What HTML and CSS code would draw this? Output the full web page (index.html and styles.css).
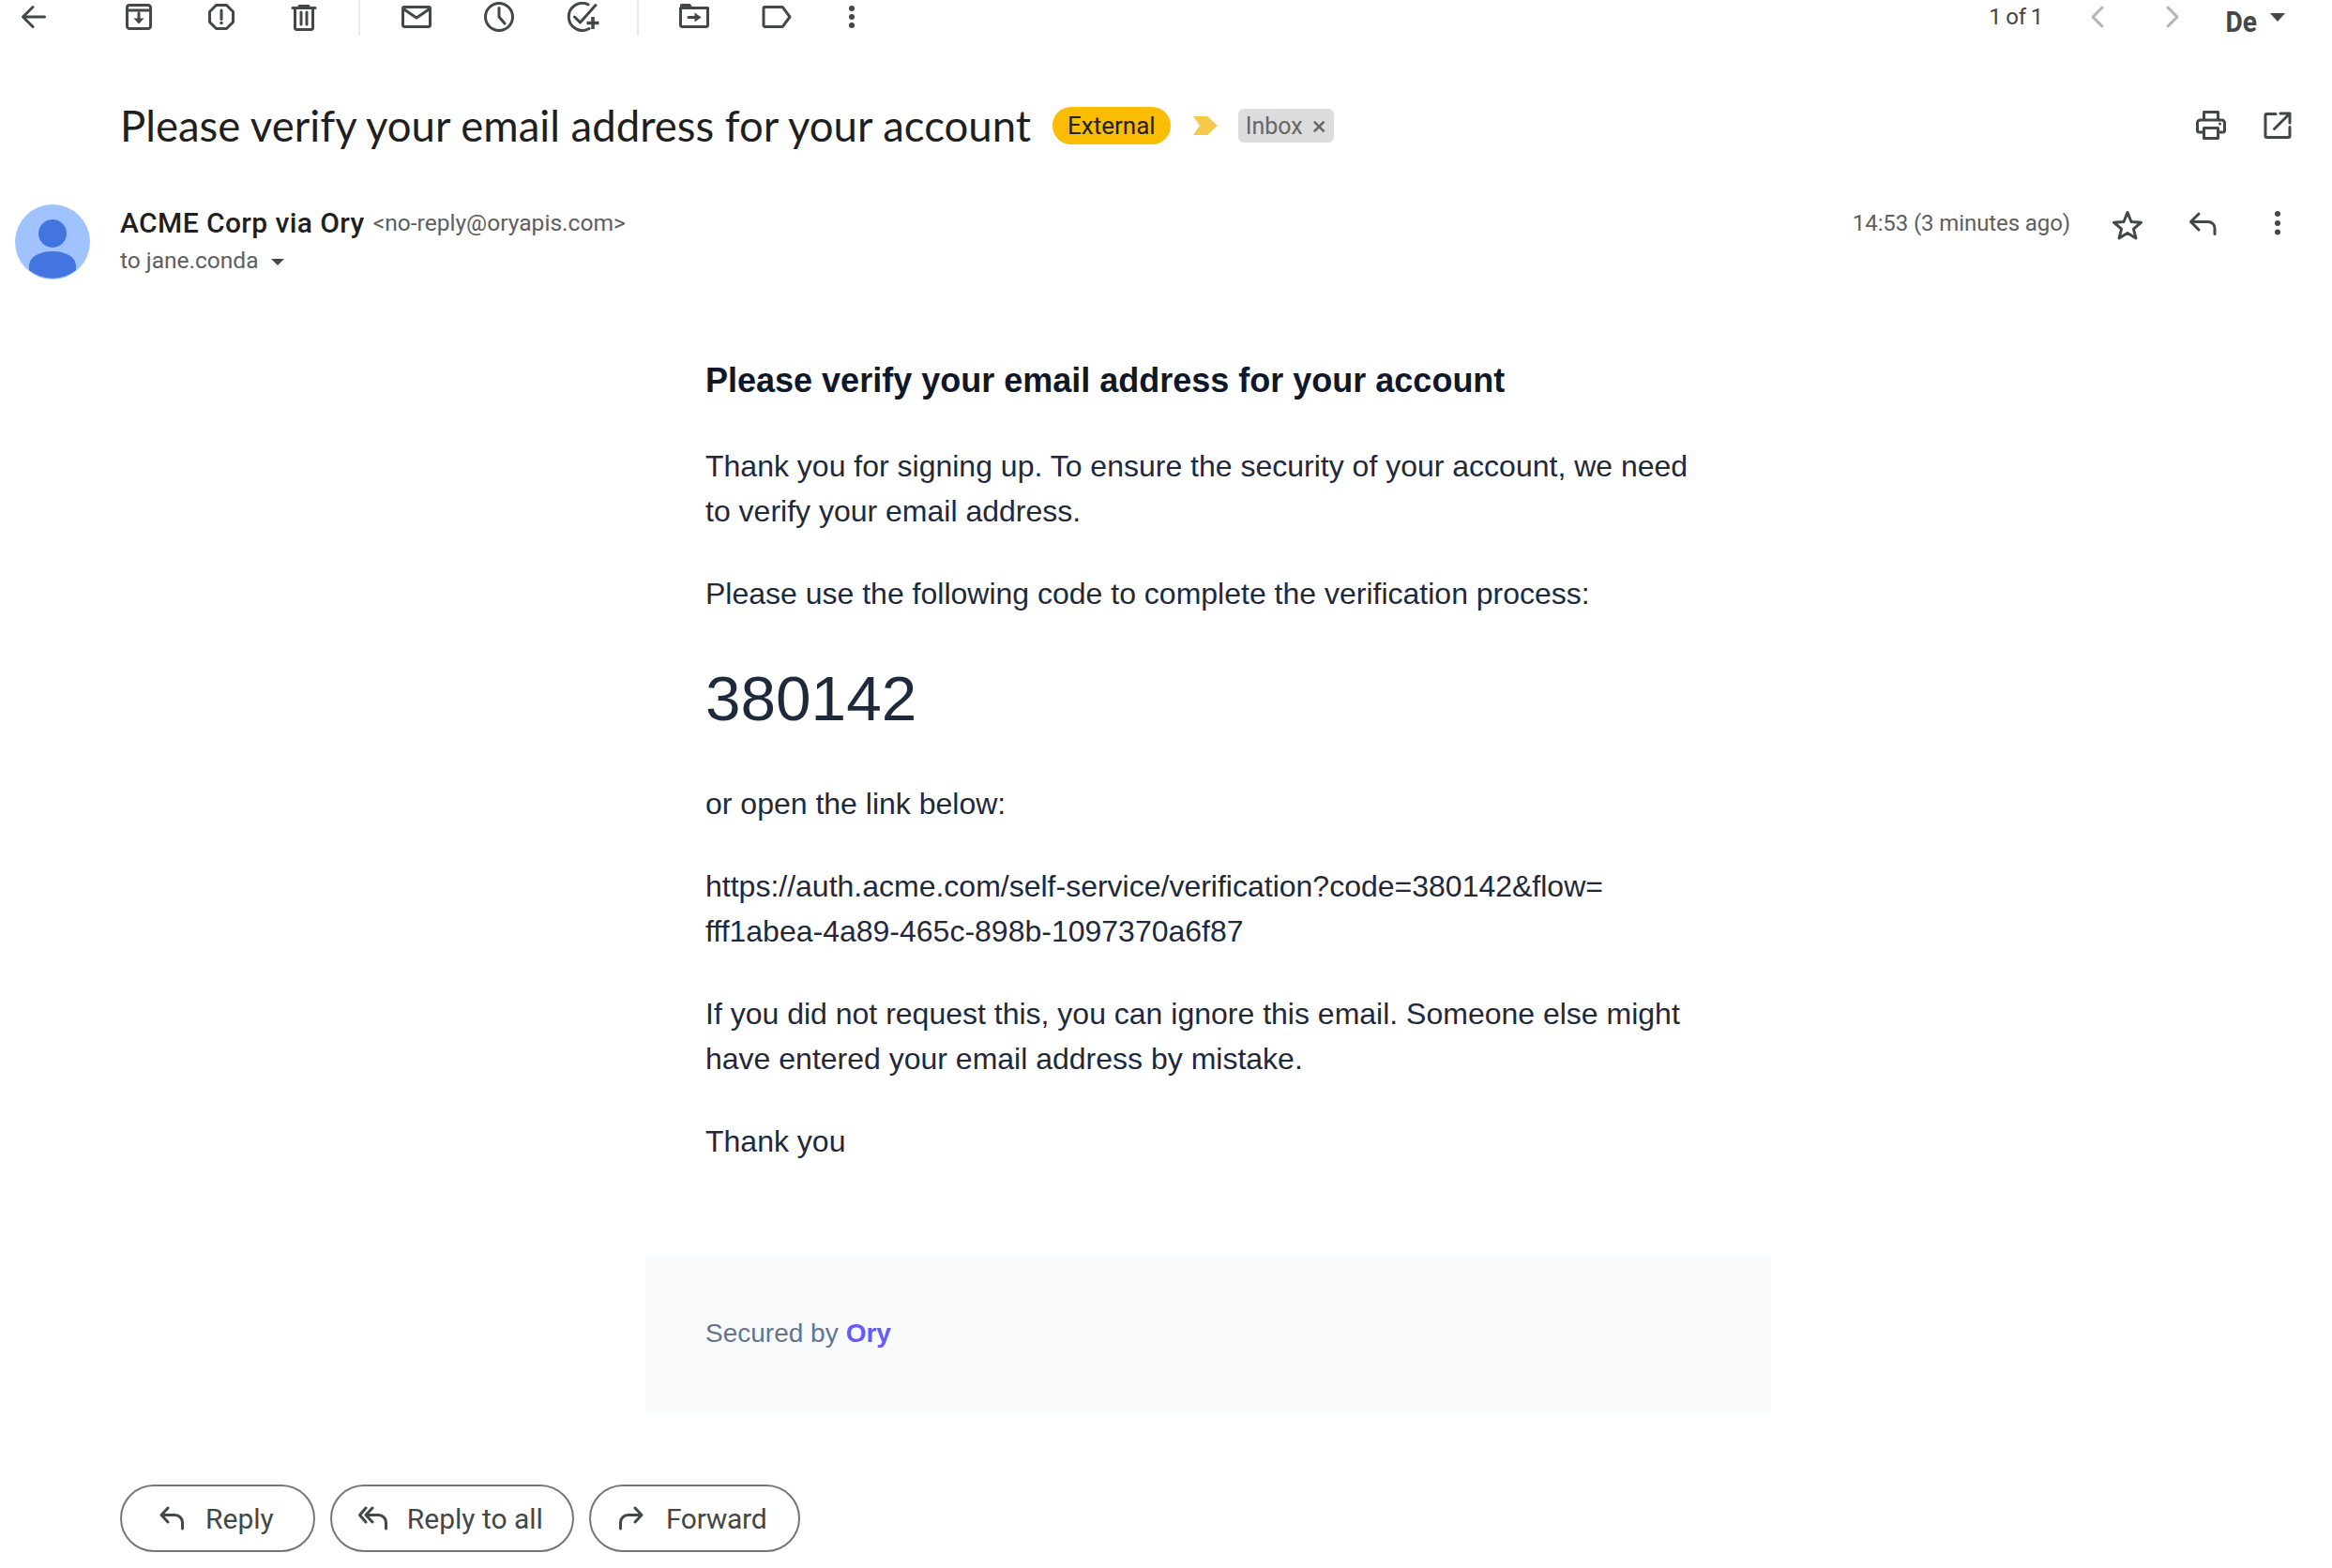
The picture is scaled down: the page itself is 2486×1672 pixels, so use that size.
FILE: index.html
```html
<!DOCTYPE html>
<html lang="en">
<head>
<meta charset="utf-8">
<title>Please verify your email address for your account</title>
<link rel="stylesheet" href="styles.css">
</head>
<body>
<header class="toolbar">
  <svg class="ico back" viewBox="0 0 32 32"><path d="M27.500 16H5M15 5.500 4.500 16 15 26.500"/></svg>
  <div class="tool-group first">
    <svg class="ico" viewBox="0 0 32 32"><path d="M6 3.500h20a2.500 2.500 0 0 1 2.500 2.500v20a2.500 2.500 0 0 1-2.500 2.500H6A2.500 2.500 0 0 1 3.500 26V6A2.500 2.500 0 0 1 6 3.500ZM3.500 9h25M16 12v9"/><path class="fill" d="M10.500 17.500h11L16 23.500Z"/></svg>
    <svg class="ico" viewBox="0 0 32 32"><path d="M10.500 3.500h11l7 7v11l-7 7h-11l-7-7v-11ZM16 9v9.500"/><circle class="fill" cx="16" cy="22.500" r="1.800"/></svg>
    <svg class="ico" viewBox="0 0 32 32"><path d="M4 6.500h24M11 4.500h10M6.500 6.500v21.500a1.500 1.500 0 0 0 1.500 1.500h16a1.500 1.500 0 0 0 1.500-1.500V6.500M13 11v13M19 11v13"/></svg>
  </div>
  <span class="divider"></span>
  <div class="tool-group">
    <svg class="ico" viewBox="0 0 32 32"><path d="M3 5.500h26a1.500 1.500 0 0 1 1.500 1.500v18a1.500 1.500 0 0 1-1.500 1.500H3A1.500 1.500 0 0 1 1.500 25V7A1.500 1.500 0 0 1 3 5.500ZM2 7.500l14 9.500 14-9.500"/></svg>
    <svg class="ico" viewBox="0 0 32 32"><circle cx="16" cy="16" r="14.500"/><path d="M16 6.500V16l6 7"/></svg>
    <svg class="ico task" viewBox="0 0 36 32"><path d="M23 2.800A14.500 14.500 0 1 0 24 28.500M8.500 16l6 6L31 3.500"/><path class="thick" d="M21.500 22.500h13M28 16v13"/></svg>
  </div>
  <span class="divider second"></span>
  <div class="tool-group third">
    <svg class="ico" viewBox="0 0 32 32"><path d="M1.500 6.500H30.500V25a1.500 1.500 0 0 1-1.500 1.500H3A1.500 1.500 0 0 1 1.500 25Z"/><path class="fill" d="M1 3.500A1.500 1.500 0 0 1 2.500 2h9l3.500 4.500H1Z"/><path d="M10 16.500h11"/><path class="fill" d="M16.500 11.500 23.500 16.500 16.500 21.500Z"/></svg>
    <svg class="ico" viewBox="0 0 32 32"><path d="M3.500 5.500h18a1.500 1.500 0 0 1 1.200.6l7.300 9.900-7.300 9.900a1.500 1.500 0 0 1-1.200.6h-18A1.500 1.500 0 0 1 2 25V7a1.500 1.500 0 0 1 1.500-1.500Z"/></svg>
    <svg class="ico dots" viewBox="0 0 32 32"><circle class="fill" cx="16" cy="7" r="3"/><circle class="fill" cx="16" cy="16" r="3"/><circle class="fill" cx="16" cy="25" r="3"/></svg>
  </div>
  <div class="pager">
    <span class="count">1 of 1</span>
    <svg class="ico pale" viewBox="0 0 32 32"><path d="M21 6 11 16l10 10"/></svg>
    <svg class="ico pale" viewBox="0 0 32 32"><path d="m11 6 10 10-10 10"/></svg>
    <span class="lang">De</span>
    <span class="caret large"></span>
  </div>
</header>

<div class="subject-row">
  <h1 class="subject">Please verify your email address for your account</h1>
  <span class="chip-external">External</span>
  <svg class="marker" viewBox="0 0 26 20"><path d="M0 0H15L26 10 15 20H0L7 10Z"/></svg>
  <span class="chip-inbox">Inbox<span class="chip-x">×</span></span>
  <div class="subject-actions">
    <svg class="ico" viewBox="0 0 32 32"><path d="M8.500 10V1.500h15V10M8.500 23H3.500a2 2 0 0 1-2-2v-8a3 3 0 0 1 3-3h23a3 3 0 0 1 3 3v8a2 2 0 0 1-2 2h-5M8.500 18.500h15v11h-15Z"/><circle class="fill" cx="25.500" cy="14" r="1.500"/></svg>
    <svg class="ico" viewBox="0 0 32 32"><path d="M14 3.500H4.500A1.500 1.500 0 0 0 3 5v22a1.500 1.500 0 0 0 1.500 1.500h23A1.500 1.500 0 0 0 29 27V17.500M19 3H29V13M29 3 12.500 19.500"/></svg>
  </div>
</div>

<section class="sender-row">
  <svg class="avatar" viewBox="0 0 80 80"><circle cx="40" cy="40" r="40" fill="#a0c3ff"/><circle cx="40" cy="31" r="15" fill="#4375e0"/><path d="M15 70V66C15 56 26 50 40 50S65 56 65 66V70A40 40 0 0 1 15 70Z" fill="#4375e0"/></svg>
  <div class="sender-text">
    <div class="from"><strong class="name">ACME Corp via Ory</strong> <span class="address">&lt;no-reply@oryapis.com&gt;</span></div>
    <div class="to">to jane.conda<span class="caret"></span></div>
  </div>
  <div class="sender-meta">
    <span class="time">14:53 (3 minutes ago)</span>
    <svg class="ico" viewBox="0 0 32 32"><path d="M16 2.500 20 12.500 30.500 13.200 22.500 20.200 25 30 16 24.500 7 30 9.500 20.200 1.500 13.200 12 12.500Z"/></svg>
    <svg class="ico" viewBox="0 0 32 32"><path d="M12 4 3.500 12.500 12 21M4 12.500h18a7 7 0 0 1 7 7v6"/></svg>
    <svg class="ico" viewBox="0 0 32 32"><circle class="fill" cx="16" cy="4" r="3"/><circle class="fill" cx="16" cy="14" r="3"/><circle class="fill" cx="16" cy="23.500" r="3"/></svg>
  </div>
</section>

<main class="message">
  <div class="message-content">
    <h2 class="message-title">Please verify your email address for your account</h2>
    <p>Thank you for signing up. To ensure the security of your account, we need to verify your email address.</p>
    <p>Please use the following code to complete the verification process:</p>
    <p class="code">380142</p>
    <p>or open the link below:</p>
    <p>https://auth.acme.com/self-service/verification?code=380142&amp;flow=<br>fff1abea-4a89-465c-898b-1097370a6f87</p>
    <p>If you did not request this, you can ignore this email. Someone else might have entered your email address by mistake.</p>
    <p>Thank you</p>
  </div>
  <footer class="message-footer">Secured by <a class="ory">Ory</a></footer>
</main>

<nav class="reply-actions">
  <a class="pill">
    <svg class="pill-ico" viewBox="0 0 28 28"><path d="M10 3 3 10.500 10 18M3.500 10.500h14a8 8 0 0 1 8 8V25"/></svg>
    Reply
  </a>
  <a class="pill all">
    <svg class="pill-ico wide" viewBox="0 0 32 28"><path d="M8 3 1.500 10.500 8 18M15 3 8 10.500 15 18M8.500 10.500h13a8 8 0 0 1 8 8V25"/></svg>
    Reply to all
  </a>
  <a class="pill fwd">
    <svg class="pill-ico" viewBox="0 0 28 28"><path d="M18 3 25 10.500 18 18M24.500 10.500h-14a8 8 0 0 0-8 8V25"/></svg>
    Forward
  </a>
</nav>
</body>
</html>
```
FILE: styles.css
```css
* { box-sizing: border-box; }
html, body { margin: 0; padding: 0; }
body {
  width: 2486px;
  height: 1672px;
  overflow: hidden;
  background: #fff;
  font-family: Roboto, "Liberation Sans", sans-serif;
  color: #1f1f1f;
}
svg { display: block; flex: none; }
.ico { width: 32px; height: 32px; fill: none; stroke: #444746; stroke-width: 3; stroke-linecap: round; stroke-linejoin: round; }
.ico .fill { fill: #444746; stroke: none; }
.ico .thick { stroke-width: 3.500; stroke-linecap: butt; }
.ico.pale { stroke: #b4b4b4; }
.ico.task { width: 36px; }
.ico.dots { margin-left: -8px; }

.toolbar { display: flex; align-items: center; height: 36px; padding-left: 20px; margin-bottom: 72px; }
.tool-group { display: flex; align-items: center; gap: 56px; }
.tool-group.first { margin-left: 80px; }
.divider { align-self: flex-start; width: 2px; height: 38px; background: #e8ecf2; margin: 0 44px 0 42px; }
.divider.second { margin: 0 43px 0 39px; }
.pager { display: flex; align-items: center; margin-left: auto; padding-right: 50px; }
.count { font-size: 24px; letter-spacing: -0.2px; word-spacing: -1px; color: #444746; margin-right: 42px; }
.pager .ico + .ico { margin-left: 48px; }
.lang { font-family: Roboto, sans-serif; font-weight: 700; font-size: 32px; line-height: 32px; color: #444746; margin-left: 36px; position: relative; top: 5px; transform: scaleX(0.88); transform-origin: right center; }
.caret { display: inline-block; width: 0; height: 0; border-left: 7px solid transparent; border-right: 7px solid transparent; border-top: 7px solid #444746; margin-left: 14px; vertical-align: middle; }
.caret.large { border-left-width: 8px; border-right-width: 8px; border-top-width: 9px; margin: 0 0 0 14px; }

.subject-row { display: flex; align-items: center; height: 52px; padding: 0 42px 0 128px; margin-bottom: 58px; }
.subject { margin: 0; font-family: Lato, Roboto, sans-serif; font-size: 45.500px; font-weight: 400; line-height: 52px; color: #1f1f1f; white-space: nowrap; }
.chip-external { display: flex; align-items: center; height: 40px; padding: 0 16px; margin-left: 23px; border-radius: 20px; background: #fbbc04; font-size: 26px; color: #202124; }
.marker { width: 26px; height: 20px; margin-left: 24px; fill: #f6c94a; }
.chip-inbox { display: flex; align-items: center; height: 36px; padding: 0 8px; margin-left: 22px; border-radius: 6px; background: #dddddd; font-size: 25px; color: #666666; }
.chip-x { margin-left: 10px; font-size: 28px; }
.subject-actions { display: flex; gap: 39px; margin-left: auto; }

.sender-row { display: flex; height: 80px; padding: 0 42px 0 16px; }
.avatar { width: 80px; height: 80px; }
.sender-text { margin-left: 32px; }
.from { display: flex; align-items: center; gap: 9px; height: 40px; line-height: 40px; }
.name { font-size: 30px; font-weight: 500; letter-spacing: 0.4px; color: #1f1f1f; }
.address { font-size: 24.600px; color: #5e5e5e; }
.to { font-size: 24.500px; line-height: 40px; color: #5e5e5e; }
.sender-meta { display: flex; align-items: flex-start; gap: 48px; margin-left: auto; padding-top: 6px; }
.time { font-size: 24px; letter-spacing: -0.1px; line-height: 32px; color: #5e5e5e; margin: -2px -3px 0 0; }

.message { margin: 84px 0 0 688px; width: 1200px; font-family: "Liberation Sans", Arial, sans-serif; color: #1e293b; }
.message-content { padding: 0 63px 0 64px; }
.message-title { margin: 0 0 43px; font-size: 36px; font-weight: 700; line-height: 48px; color: #0f172a; }
.message p { margin: 0 0 40px; font-size: 32px; line-height: 48px; }
.message p.code { font-size: 67.500px; line-height: 96px; margin-bottom: 40px; }
.message-footer { margin-top: 96px; height: 170px; display: flex; align-items: center; gap: 8px; padding-left: 64px; background: #f9fafc; font-size: 28px; color: #64748b; }
.ory { font-weight: 700; color: #635bff; }

.reply-actions { display: flex; gap: 16px; margin: 76px 0 0 128px; }
.pill { display: flex; align-items: center; height: 72px; padding: 0 42px 0 39px; border: 2px solid #747775; border-radius: 36px; font-size: 30px; color: #444746; }
.pill.all { padding: 0 31px 0 28px; }
.pill.fwd { padding: 0 34px 0 29px; letter-spacing: -0.3px; }
.pill-ico { width: 28px; height: 28px; margin-right: 22px; fill: none; stroke: #444746; stroke-width: 3; stroke-linecap: round; stroke-linejoin: round; }
.pill-ico.wide { width: 32px; margin-right: 20px; }
.pill.fwd .pill-ico { margin-right: 23px; }
```
